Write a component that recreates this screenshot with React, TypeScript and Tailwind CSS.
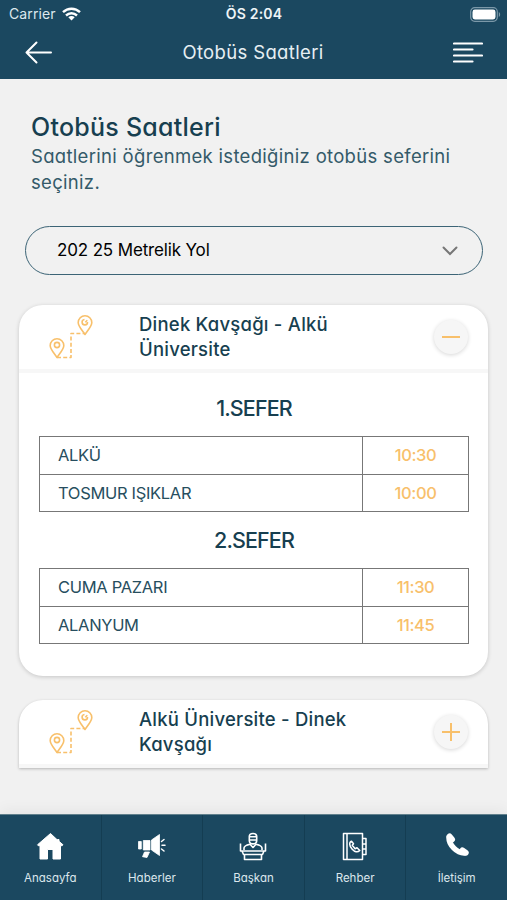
import type { ReactNode } from "react";

type Stop = { name: string; time: string };
type Trip = { title: string; stops: Stop[] };

const trips: Trip[] = [
	{
		title: "1.SEFER",
		stops: [
			{ name: "ALKÜ", time: "10:30" },
			{ name: "TOSMUR IŞIKLAR", time: "10:00" },
		],
	},
	{
		title: "2.SEFER",
		stops: [
			{ name: "CUMA PAZARI", time: "11:30" },
			{ name: "ALANYUM", time: "11:45" },
		],
	},
];

function StatusBar() {
	return (
		<div className="grid h-7 grid-cols-3 items-center pl-[9px] pr-[6px] font-['Inter',sans-serif] [font-feature-settings:normal]">
			<div className="flex items-center gap-[6px] text-sm text-[#dde8ee]">
				<span className="tracking-[0.1px]">Carrier</span>
				<svg width="19" height="14" viewBox="0 0 19 14" fill="none" stroke="#fff" strokeWidth="2.4">
					<path d="M1 5.200C5.800.6 13.200.6 18 5.200" />
					<path d="M4 8.500c3.200-3 7.800-3 11 0" />
					<path d="M9.500 13.500 6.300 10.300c1.800-1.600 4.600-1.600 6.400 0Z" fill="#fff" stroke="none" />
				</svg>
			</div>
			<span className="-ml-[2px] text-center text-sm font-semibold tracking-[0.2px] text-[#eef4f7]">ÖS 2:04</span>
			<svg className="justify-self-end" width="31" height="15" viewBox="0 0 31 15">
				<rect x=".7" y=".7" width="26.600" height="13.600" rx="4" fill="none" stroke="#7b98a8" strokeWidth="1.200" />
				<rect x="2.500" y="2.500" width="23" height="10" rx="2.400" fill="#fff" />
				<path d="M28.800 5v5c1.800-.8 1.800-4.200 0-5Z" fill="#7b98a8" />
			</svg>
		</div>
	);
}

function Header() {
	return (
		<header className="h-[79px] bg-[#1b4860] text-white">
			<StatusBar />
			<div className="flex h-[49px] items-center justify-between pl-[25px] pr-[24px]">
				<svg width="28" height="24" viewBox="0 0 28 24" fill="none" stroke="#fff" strokeWidth="2" strokeLinecap="round" strokeLinejoin="round">
					<path d="M26 11.500H1.500M11.500 1.500l-10 10 10 10" />
				</svg>
				<h2 className="text-[18.500px] tracking-[0.35px] text-[#e6eff3]">Otobüs Saatleri</h2>
				<svg width="30" height="24" viewBox="0 0 30 24" stroke="#fff" strokeWidth="2.200" strokeLinecap="round">
					<path d="M1 2.500h28M1 8.500h18.500M1 14.500h28M1 20.500h18.500" />
				</svg>
			</div>
		</header>
	);
}

function RouteIcon() {
	return (
		<svg width="46" height="46" viewBox="0 0 46 46" fill="none" stroke="#f8c06b" strokeWidth="1.600" strokeLinejoin="round">
			<path d="M36 20.500c-4-5.800-6.800-8.500-6.800-12a6.800 6.800 0 0 1 13.600 0c0 3.500-2.800 6.200-6.800 12Z" />
			<path d="M38.500 8a2.700 2.700 0 1 1-3-2.500M36.300 8.300l2-2" />
			<path d="M8 43.500c-4-5.800-6.800-8.500-6.800-12a6.800 6.800 0 0 1 13.600 0c0 3.500-2.800 6.200-6.800 12Z" />
			<circle cx="8" cy="31" r="2.600" />
			<path d="M8 43.500h14v-24h14" strokeDasharray="4 2.200" />
		</svg>
	);
}

function RouteHeader({ open, children }: { open?: boolean; children: ReactNode }) {
	return (
		<div className="flex h-[68px] items-center border-b-4 border-[#f7f7f7] pl-[30px] pr-5">
			<RouteIcon />
			<h3 className="ml-[44px] flex-1 text-[18.500px] leading-[25.500px] font-medium tracking-[0.22px]">{children}</h3>
			<button className="flex size-[34px] items-center justify-center rounded-full bg-[#f6f6f6] shadow-[0_1px_4px_rgba(0,0,0,0.16)]">
				<svg width="20" height="20" viewBox="0 0 20 20" stroke="#f8c06b" strokeWidth="2">
					<path d={open ? "M1 10h18" : "M1 10h18M10 1v18"} />
				</svg>
			</button>
		</div>
	);
}

function TripTable({ trip }: { trip: Trip }) {
	return (
		<section>
			<h4 className="text-center text-[21.500px] leading-[32px] font-medium tracking-[-0.9px]">{trip.title}</h4>
			<table className="mt-[12px] w-full table-fixed border-collapse">
				<tbody>
					{trip.stops.map((stop) => (
						<tr key={stop.name} className="h-[37.500px]">
							<td className="border border-[#777] pl-[18px] pt-px text-[16.500px] tracking-[-0.32px] text-[#274e5e]">{stop.name}</td>
							<td className="w-[106px] border border-[#777] pt-px text-center text-[16.500px] font-medium tracking-[-0.4px] text-[#f8c06b]">{stop.time}</td>
						</tr>
					))}
				</tbody>
			</table>
		</section>
	);
}

function NavItem({ label, children }: { label: string; children: ReactNode }) {
	return (
		<a className="flex flex-1 flex-col items-center border-r border-[#143d52] pt-[17px] last:border-r-0">
			<svg width="30" height="30" viewBox="0 0 30 30">{children}</svg>
			<span className="mt-[8px] text-[11.500px] leading-4 text-[#dbe7ed]">{label}</span>
		</a>
	);
}

function BottomNav() {
	return (
		<nav className="flex h-[86px] border-t border-[#61808c] bg-[#1b4860] shadow-[0_-4px_14px_rgba(0,0,0,0.05)]">
			<NavItem label="Anasayfa">
				<path fill="#fff" stroke="#fff" strokeWidth="1" strokeLinejoin="round" d="M15.500 1.500 2.500 12.800l.8.900H5V27h7.500V17.500h5.500V27h7.500V13.700h1.700l.8-.9-4-3.500V7.500h-1.500v.6Z" />
			</NavItem>
			<NavItem label="Haberler">
				<g fill="#fff" stroke="#fff" strokeWidth=".8" strokeLinejoin="round">
					<path d="M1.500 9.500h2.800v7.500H1.500ZM6.300 8.500H13v9.500H6.300ZM14.500 8 22.500 2.500v21l-8-5.500ZM7.500 20h5l-2.500 5.500-4.500-.8Z" />
					<path d="M24.500 9.500 27 7.500M25 13.200h3M24.500 17l2.500 2" strokeWidth="1.500" strokeLinecap="round" />
				</g>
			</NavItem>
			<NavItem label="Başkan">
				<g fill="none" stroke="#fff" strokeWidth="1.600" strokeLinejoin="round">
					<path d="M11.300 4.500c0-4 7.400-4 7.400 0v4c0 4.500-7.400 4.500-7.400 0ZM11.500 4.800h7M12 8h6" />
					<path d="M6 18v-2c0-2 2.500-3 6-3.800l3 3.300 3-3.300c3.500.8 6 1.800 6 3.800v2" />
					<path d="M2.500 11.500v7.500h25v-7.500M4 19l1.500 3.500h19L26 19M6.500 22.500h17V27.500h-17Z" />
				</g>
			</NavItem>
			<NavItem label="Rehber">
				<g fill="none" stroke="#fff" strokeWidth="1.500" strokeLinejoin="round">
					<path d="M3.500 1.500h19v26h-19ZM7 1.500v26M22.500 6.500h3.500v16h-3.500M22.500 12h3.500M22.500 17h3.500" />
					<path d="M11.500 9.200c-2.700 1-2.200 4.700.5 7.800s5.500 3.700 7.800 1.500L17 15.800l-1.900.9-2.800-3.400 1.200-1.500Z" />
				</g>
			</NavItem>
			<NavItem label="İletişim">
				<g fill="none" stroke="#fff" strokeLinecap="round">
					<path d="M7 6c0 7 8 15 15 15" strokeWidth="5.500" />
					<path d="M7.500 4.500 10 7.500M20.500 18.500l3.200 2.200" strokeWidth="6" />
				</g>
			</NavItem>
		</nav>
	);
}

export default function App() {
	return (
		<div className="flex h-[900px] w-[507px] flex-col overflow-hidden bg-[#f1f1f1] font-['Inter',sans-serif] text-[#173f50] [font-feature-settings:'cv11']">
			<Header />
			<main className="flex-1 px-[19px]">
				<div className="pl-[12px] pt-[32px]">
					<h1 className="text-[25px] leading-8 font-medium tracking-[0.25px]">Otobüs Saatleri</h1>
					<p className="mt-px text-[18.500px] leading-[25.500px] tracking-[0.31px] text-[#345a69]">
						Saatlerini öğrenmek istediğiniz otobüs seferini
						<br />
						seçiniz.
					</p>
				</div>
				<button className="mx-[6px] mt-[31px] flex h-[49px] w-[458px] items-center justify-between rounded-full border-[1.500px] border-[#3c6476] pl-[31px] pr-[24px] text-[17px] tracking-[-0.15px] text-black">
					202 25 Metrelik Yol
					<svg width="16" height="10" viewBox="0 0 16 10" fill="none" stroke="#777" strokeWidth="2" strokeLinecap="round">
						<path d="m1.500 1.500 6.500 6.500 6.500-6.500" />
					</svg>
				</button>
				<article className="mt-[30px] h-[371px] rounded-[24px] bg-white shadow-[0_1px_4px_rgba(0,0,0,0.18)]">
					<RouteHeader open>Dinek Kavşağı - Alkü<br />Üniversite</RouteHeader>
					<div className="space-y-[12px] pl-5 pr-[19px] pt-[19px]">
						{trips.map((trip) => <TripTable key={trip.title} trip={trip} />)}
					</div>
				</article>
				<article className="mt-[24px] rounded-t-[24px] bg-white shadow-[0_1px_3px_rgba(0,0,0,0.25)]">
					<RouteHeader>Alkü Üniversite - Dinek<br />Kavşağı</RouteHeader>
				</article>
			</main>
			<BottomNav />
		</div>
	);
}
